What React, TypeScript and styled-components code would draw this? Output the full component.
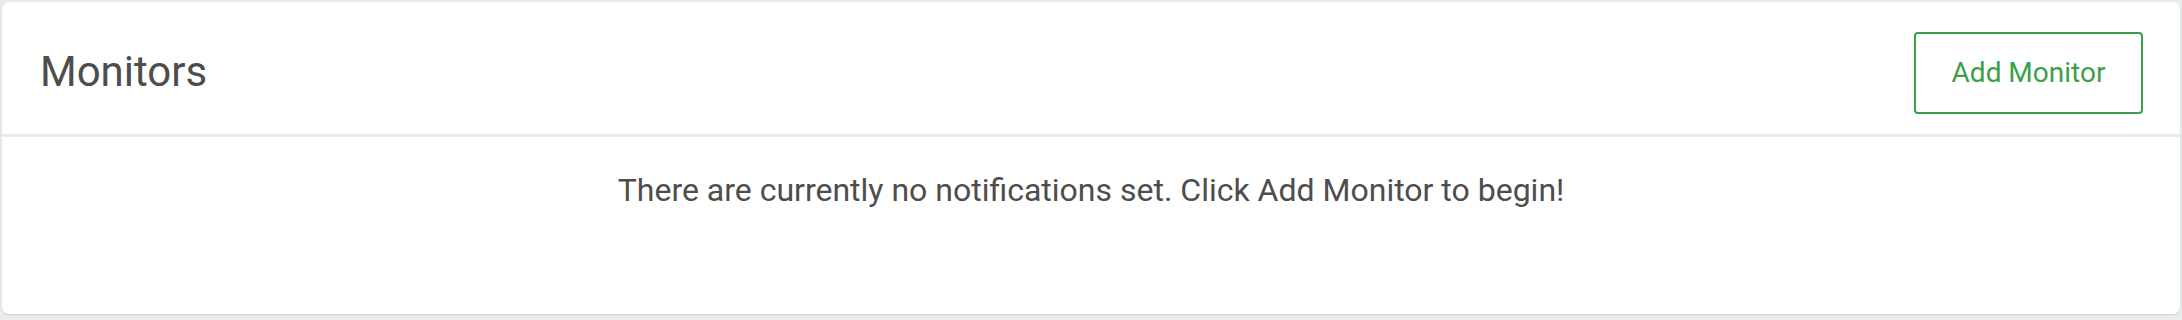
import React from 'react'
import styled, { createGlobalStyle } from 'styled-components'

const GlobalStyle = createGlobalStyle`
  html, body {
    margin: 0;
    padding: 0;
    background-color: #e9ede9;
    font-family: Roboto, "Liberation Sans", sans-serif;
  }
`

const App = () => {
  return (
    <Page>
      <GlobalStyle />
      <Card>
        <CardHeader>
          <Title>Monitors</Title>
          <OutlineButton>Add Monitor</OutlineButton>
        </CardHeader>
        <CardBody>
          <EmptyText>There are currently no notifications set. Click Add Monitor to begin!</EmptyText>
        </CardBody>
      </Card>
    </Page>
  )
}

export default App

const Page = styled.div`
  padding: 2px 2px 0 2px;
  height: 320px;
  box-sizing: border-box;
`

const Card = styled.div`
  height: 312px;
  box-sizing: border-box;
  background-color: #ffffff;
  border-radius: 7px;
  box-shadow: 0 1px 2px rgba(0, 0, 0, 0.12);
  display: flex;
  flex-direction: column;
`

const CardHeader = styled.div`
  height: 135px;
  box-sizing: border-box;
  border-bottom: 3px solid #e9ede9;
  display: flex;
  align-items: center;
  justify-content: space-between;
  padding: 0 37px 0 38px;
`

const Title = styled.h1`
  margin: 0;
  font-size: 42px;
  font-weight: 400;
  color: #4d4d4d;
  padding-top: 6px;
`

const OutlineButton = styled.button`
  width: 229px;
  height: 82px;
  margin-top: 9px;
  background: #ffffff;
  border: 2px solid #3c9f4a;
  border-radius: 4px;
  color: #3c9f4a;
  font-family: Roboto, "Liberation Sans", sans-serif;
  font-size: 28px;
  cursor: pointer;
`

const CardBody = styled.div`
  flex: 1;
  display: flex;
  justify-content: center;
  padding-top: 34px;
`

const EmptyText = styled.p`
  margin: 0;
  font-size: 32px;
  color: #4d4d4d;
`
